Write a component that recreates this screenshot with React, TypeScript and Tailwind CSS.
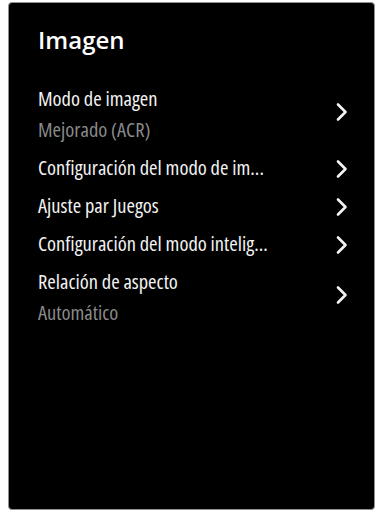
import React from 'react'

type Item = {
  label: string
  value?: string
}

const items: Item[] = [
  { label: 'Modo de imagen', value: 'Mejorado (ACR)' },
  { label: 'Configuración del modo de im...' },
  { label: 'Ajuste par Juegos' },
  { label: 'Configuración del modo intelig...' },
  { label: 'Relación de aspecto', value: 'Automático' },
]

const Chevron = () => (
  <svg width="12" height="20" viewBox="0 0 12 20" fill="none" className="shrink-0">
    <path d="M2 2.5l7.5 7.5-7.5 7.5" stroke="#f4f4f4" strokeWidth="2.6" strokeLinecap="round" strokeLinejoin="round" />
  </svg>
)

const App = () => {
  return (
    <div className="w-[378px] h-[512px] bg-white pt-[2px] pl-[8px] pr-[3px] pb-[2px]">
      <div className="h-full rounded-[4px] bg-black border border-[#8f8f8f] pt-[21px] pl-[29px] pr-[26px] text-[#f2f2f2]">
        <h1 className="font-['Open_Sans',sans-serif] text-[24px] font-semibold leading-[32px] text-white">Imagen</h1>

        <ul className="mt-[23px] flex flex-col font-['Open_Sans',sans-serif] [font-stretch:condensed]">
          {items.map((item) => (
            <li
              key={item.label}
              className={`flex justify-between ${item.value ? 'h-[69px] items-start' : 'h-[38px] items-center'}`}
            >
              <div className="flex flex-col">
                <span className="text-[20.5px] leading-[38px]">{item.label}</span>
                {item.value && <span className="text-[20.5px] leading-[24px] text-[#8a8a8a]">{item.value}</span>}
              </div>
              <div className={item.value ? 'mt-[23px]' : 'mt-[3px]'}>
                <Chevron />
              </div>
            </li>
          ))}
        </ul>
      </div>
    </div>
  )
}

export default App
